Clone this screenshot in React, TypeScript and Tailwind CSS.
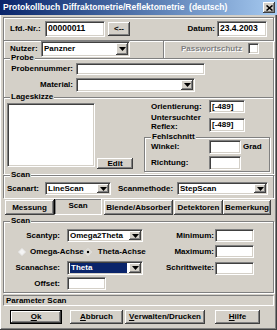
import React from "react";

const sunken =
  "bg-white border border-t-[#808080] border-l-[#808080] border-b-white border-r-white shadow-[inset_1px_1px_0_#404040,inset_-1px_-1px_0_#d4d0c8]";
const raised =
  "bg-[#d4d0c8] shadow-[inset_-1px_-1px_0_#404040,inset_1px_1px_0_#fff,inset_-2px_-2px_0_#808080]";
const etched = "border border-[#808080] shadow-[inset_1px_1px_0_#fff,1px_1px_0_#fff]";

type FieldProps = { w: string; h: string; value?: string; className?: string };

const Field = ({ w, h, value, className = "" }: FieldProps) => (
  <div className={`${sunken} ${w} ${h} ${className} flex items-center pl-[2px] overflow-hidden whitespace-nowrap`}>
    {value}
  </div>
);

const Arrow = () => (
  <svg width="7" height="4" viewBox="0 0 7 4">
    <path d="M0 0h7L3.5 4z" fill="#000" />
  </svg>
);

type ComboProps = { w: string; h: string; value?: string; selected?: boolean };

const Combo = ({ w, h, value, selected }: ComboProps) => (
  <div className={`${sunken} ${w} ${h} flex items-stretch p-[1px] overflow-hidden`}>
    <div className="flex-1 flex items-center pl-[1px] pr-[2px] whitespace-nowrap">
      {selected ? (
        <span className="flex-1 h-full flex items-center bg-[#0a246a] text-white pl-[1px]">{value}</span>
      ) : (
        value
      )}
    </div>
    <div className={`${raised} w-[12px] flex items-center justify-center`}>
      <Arrow />
    </div>
  </div>
);

type BtnProps = { w: string; h: string; children: React.ReactNode; isDefault?: boolean; className?: string };

const Btn = ({ w, h, children, isDefault, className = "" }: BtnProps) => (
  <div
    className={`${w} ${h} ${className} ${
      isDefault ? "border border-black shadow-[inset_-1px_-1px_0_#404040,inset_1px_1px_0_#fff,inset_-2px_-2px_0_#808080]" : raised
    } bg-[#d4d0c8] flex items-center justify-center whitespace-nowrap`}
  >
    {children}
  </div>
);

type GroupProps = { label: string; className?: string; children?: React.ReactNode; noBottom?: boolean };

const Group = ({ label, className = "", children, noBottom }: GroupProps) => (
  <div className={`relative ${etched} ${noBottom ? "border-b-0" : ""} ${className}`}>
    <span className="absolute left-[6px] -top-[5px] bg-[#d4d0c8] px-[1px] leading-none">{label}</span>
    {children}
  </div>
);

const Radio = ({ checked }: { checked?: boolean }) => (
  <svg width="8" height="8" viewBox="0 0 8 8" className="shrink-0">
    <path d="M4 0.5L7.5 4L4 7.5L0.5 4z" fill={checked ? "#d4d0c8" : "#f4f4f4"} stroke="#e8e8e8" />
    {checked && <rect x="3" y="3" width="2" height="2" fill="#000" />}
  </svg>
);

export default function App() {
  return (
    <div className="w-[277px] h-[330px] bg-[#d4d0c8] text-black text-[8px] font-bold leading-none font-['Liberation_Sans',Arial,sans-serif] flex flex-col overflow-hidden whitespace-nowrap shadow-[inset_-1px_-1px_0_#404040,inset_1px_1px_0_#fff,inset_-2px_-2px_0_#808080]">
      {/* title bar */}
      <div className="h-[15px] flex items-center bg-gradient-to-r from-[#0a246a] to-[#a6caf0] pl-[3px] pr-[2px] text-white text-[8.5px]">
        <span className="flex-1 whitespace-pre">Protokollbuch Diffraktometrie/Reflektometrie  (deutsch)</span>
        <div className={`${raised} w-[12px] h-[11px] flex items-center justify-center`}>
          <svg width="7" height="6" viewBox="0 0 7 6">
            <path d="M0.5 0.5l6 5M6.5 0.5l-6 5" stroke="#000" strokeWidth="1.6" />
          </svg>
        </div>
      </div>

      <div className="flex flex-col px-[3px]">
        {/* Lfd.-Nr. / Datum */}
        <div className={`${etched} mt-[2px] h-[24px] flex items-center pl-[6px] pr-[6px] pb-[1px]`}>
          <span className="w-[35px]">Lfd.-Nr.:</span>
          <Field w="w-[60px]" h="h-[16px]" value="00000011" className="text-[8.5px]" />
          <Btn w="w-[22px]" h="h-[14px]" className="ml-[3px]">
            &lt;--
          </Btn>
          <span className="ml-auto mr-[2px]">Datum:</span>
          <Field w="w-[50px]" h="h-[16px]" value="23.4.2003" className="text-[8.5px]" />
        </div>

        {/* Nutzer / Passwortschutz */}
        <div className="h-[17px] flex border-x border-l-[#808080] border-r-white">
          <div className="w-[160px] flex items-start pl-[6px] border-r border-[#808080] shadow-[inset_1px_0_0_#fff]">
            <span className="w-[31px] mt-[4px]">Nutzer:</span>
            <Combo w="w-[89px]" h="h-[16px]" value="Panzner" />
          </div>
          <div className="flex-1 flex items-start pl-[16px] pr-[14px] border-l border-white">
            <span className="mt-[4px] text-[#808080] [text-shadow:1px_1px_0_#fff]">Passwortschutz</span>
            <div className={`${sunken} ml-auto mt-[2px] w-[11px] h-[11px] bg-[#d4d0c8]`} />
          </div>
        </div>

        {/* Probe */}
        <Group label="Probe" noBottom className="h-[39px]">
          <div className="flex items-center mt-[4px]">
            <span className="w-[69px] text-right">Probennummer:</span>
            <Field w="w-[129px]" h="h-[12px]" className="ml-[3px]" />
          </div>
          <div className="flex items-center mt-[3px]">
            <span className="w-[69px] text-right">Material:</span>
            <div className="ml-[3px]">
              <Combo w="w-[119px]" h="h-[14px]" />
            </div>
          </div>
        </Group>

        {/* Lageskizze */}
        <Group label="Lageskizze" noBottom className="h-[77px] flex">
          <div className={`${sunken} ml-[3px] mt-[5px] w-[88px] h-[64px]`} />
          <Btn w="w-[36px]" h="h-[11px]" className="ml-[2px] mt-[60px]">
            Edit
          </Btn>
          <div className="ml-[11px] w-[126px] flex flex-col">
            <div className="flex items-center mt-[2px]">
              <span className="w-[65px] pl-[7px]">Orientierung:</span>
              <Field w="w-[36px]" h="h-[13px]" value="[-489]" />
            </div>
            <div className="flex items-start mt-[1px]">
              <span className="w-[65px] pl-[7px] leading-[8.5px]">
                Untersuchter
                <br />
                Reflex:
              </span>
              <Field w="w-[36px]" h="h-[14px]" value="[-489]" className="mt-[4px]" />
            </div>
            <Group label="Fehlschnitt" className="mt-[5px] h-[35px] flex flex-col">
              <div className="flex items-center mt-[2px]">
                <span className="w-[64px] pl-[6px]">Winkel:</span>
                <Field w="w-[32px]" h="h-[14px]" />
                <span className="ml-[2px]">Grad</span>
              </div>
              <div className="flex items-center mt-[2px]">
                <span className="w-[64px] pl-[6px]">Richtung:</span>
                <Field w="w-[32px]" h="h-[14px]" />
              </div>
            </Group>
          </div>
        </Group>

        {/* Scan (Kopf) */}
        <Group label="Scan" noBottom className="mt-[1px] h-[23px]">
          <div className="flex items-center mt-[6px]">
            <span className="w-[41px] pl-[3px]">Scanart:</span>
            <Combo w="w-[66px]" h="h-[13px]" value="LineScan" />
            <span className="w-[59px] ml-[7px]">Scanmethode:</span>
            <Combo w="w-[91px]" h="h-[13px]" value="StepScan" />
          </div>
        </Group>

        {/* Tabs */}
        <div className="h-[17px] flex items-end pl-[2px]">
          <Btn w="w-[49px]" h="h-[15px]">Messung</Btn>
          <div className="w-[48px] h-[17px] flex justify-center pt-[3px] border border-t-black border-l-black border-b-white border-r-white shadow-[inset_1px_1px_0_#808080] bg-[#d4d0c8]">
            Scan
          </div>
          <Btn w="w-[69px]" h="h-[15px]" className="ml-[2px]">Blende/Absorber</Btn>
          <Btn w="w-[49px]" h="h-[15px]" className="ml-[1px]">Detektoren</Btn>
          <Btn w="w-[48px]" h="h-[15px]">Bemerkung</Btn>
        </div>

        {/* Scan (Parameter) */}
        <Group label="Scan" className="mt-[6px] h-[72px] flex flex-col">
          <div className="flex items-center mt-[7px]">
            <span className="w-[56px] text-right">Scantyp:</span>
            <div className="ml-[7px]">
              <Combo w="w-[76px]" h="h-[13px]" value="Omega2Theta" />
            </div>
            <span className="w-[72px] text-right pr-[1px]">Minimum:</span>
            <Field w="w-[39px]" h="h-[13px]" />
          </div>
          <div className="flex items-center mt-[3px]">
            <div className="w-[139px] flex items-center pl-[14px]">
              <span className="w-[68px] flex items-center">
                <Radio />
                <span className="ml-[4px]">Omega-Achse</span>
              </span>
              <Radio checked />
              <span className="ml-[6px]">Theta-Achse</span>
            </div>
            <span className="w-[72px] text-right pr-[1px]">Maximum:</span>
            <Field w="w-[39px]" h="h-[13px]" />
          </div>
          <div className="flex items-center mt-[3px]">
            <span className="w-[56px] text-right">Scanachse:</span>
            <div className="ml-[7px]">
              <Combo w="w-[76px]" h="h-[14px]" value="Theta" selected />
            </div>
            <span className="w-[72px] text-right pr-[1px]">Schrittweite:</span>
            <Field w="w-[39px]" h="h-[13px]" />
          </div>
          <div className="flex items-center mt-[2px]">
            <span className="w-[56px] text-right">Offset:</span>
            <Field w="w-[39px]" h="h-[13px]" className="ml-[7px]" />
          </div>
        </Group>

        {/* Statuszeile */}
        <div className="mt-[2px] h-[11px] flex items-center pl-[2px] border border-t-[#808080] border-l-[#808080] border-b-white border-r-white">
          Parameter Scan
        </div>

        {/* Buttons */}
        <div className="mt-[4px] h-[14px] flex pl-[7px]">
          <Btn w="w-[52px]" h="h-[14px]" isDefault>
            <span className="underline">O</span>k
          </Btn>
          <Btn w="w-[53px]" h="h-[14px]" className="ml-[8px]">
            <span className="underline">A</span>bbruch
          </Btn>
          <Btn w="w-[80px]" h="h-[14px]" className="ml-[2px]">
            <span className="underline">V</span>erwalten/Drucken
          </Btn>
          <Btn w="w-[45px]" h="h-[14px]" className="ml-[10px]">
            <span className="underline">H</span>ilfe
          </Btn>
        </div>
      </div>
    </div>
  );
}
